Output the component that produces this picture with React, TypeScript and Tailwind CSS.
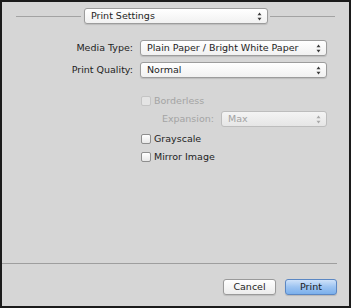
const font = { fontFamily: '"DejaVu Sans", "Liberation Sans", sans-serif' };

function Arrows({ dim = false }: { dim?: boolean }) {
  return (
    <svg width="5" height="9" viewBox="0 0 5 9" className="shrink-0">
      <path d="M2.5 0.5 L4.5 3.3 L0.5 3.3 Z" fill={dim ? '#a8a8a8' : '#3a3a3a'} />
      <path d="M2.5 8.5 L4.5 5.7 L0.5 5.7 Z" fill={dim ? '#a8a8a8' : '#3a3a3a'} />
    </svg>
  );
}

function Popup({
  value,
  width,
  disabled = false,
}: {
  value: string;
  width: string;
  disabled?: boolean;
}) {
  return (
    <div
      className={`${width} flex h-[16px] items-center justify-between rounded-[3px] border pl-[6px] pr-[5px] ${
        disabled
          ? 'border-[#bdbdbd] bg-gradient-to-b from-[#f4f4f4] to-[#e6e6e6] text-[#a2a2a2]'
          : 'border-[#9c9c9c] bg-gradient-to-b from-white to-[#f1f1f1] text-[#1e1e1e] shadow-[0_1px_1px_rgba(0,0,0,0.12)]'
      }`}
    >
      <span className="leading-none">{value}</span>
      <Arrows dim={disabled} />
    </div>
  );
}

function Checkbox({ label, disabled = false }: { label: string; disabled?: boolean }) {
  return (
    <div className="flex h-[14px] items-center gap-[3px]">
      <span
        className={`h-[10px] w-[10px] rounded-[2px] border ${
          disabled
            ? 'border-[#c4c4c4] bg-[#e4e4e4]'
            : 'border-[#8e8e8e] bg-gradient-to-b from-white to-[#e8e8e8]'
        }`}
      />
      <span className={`leading-none ${disabled ? 'text-[#a4a4a4]' : 'text-[#1e1e1e]'}`}>{label}</span>
    </div>
  );
}

export default function App() {
  return (
    <div
      style={font}
      className="flex h-[308px] w-[351px] flex-col border-2 border-[#1b1b1b] bg-[#d6d6d6] text-[9.5px]"
    >
      <div className="mt-[6px] flex h-[16px] items-center">
        <div className="ml-[14px] mr-[3px] h-px flex-1 bg-[#a3a3a3]" />
        <Popup value="Print Settings" width="w-[184px]" />
        <div className="ml-[2px] mr-[14px] h-px flex-1 bg-[#a3a3a3]" />
      </div>

      <div className="mt-[16px] flex h-[16px] items-center">
        <span className="w-[131px] text-right text-[#1e1e1e]">Media Type:</span>
        <div className="ml-[7px]">
          <Popup value="Plain Paper / Bright White Paper" width="w-[187px]" />
        </div>
      </div>
      <div className="mt-[6px] flex h-[16px] items-center">
        <span className="w-[131px] text-right text-[#1e1e1e]">Print Quality:</span>
        <div className="ml-[7px]">
          <Popup value="Normal" width="w-[187px]" />
        </div>
      </div>

      <div className="ml-[139px] mt-[16px] flex w-[186px] flex-col">
        <Checkbox label="Borderless" disabled />
        <div className="mt-[3px] flex h-[16px] items-center">
          <span className="flex-1 text-right text-[#a4a4a4]">Expansion:</span>
          <div className="ml-[7px]">
            <Popup value="Max" width="w-[106px]" disabled />
          </div>
        </div>
        <div className="mt-[5px]">
          <Checkbox label="Grayscale" />
        </div>
        <div className="mt-[4px]">
          <Checkbox label="Mirror Image" />
        </div>
      </div>

      <div className="flex-1" />

      <div className="mr-[12px] h-px bg-[#9e9e9e]" />

      <div className="mb-[11px] mr-[12px] mt-[15px] flex justify-end gap-[9px]">
        <button className="h-[16px] w-[53px] rounded-[3px] border border-[#9a9a9a] bg-gradient-to-b from-white to-[#ececec] leading-none text-[#1e1e1e] shadow-[0_1px_1px_rgba(0,0,0,0.12)]">
          Cancel
        </button>
        <button className="h-[16px] w-[52px] rounded-[3px] border border-[#5b87c3] bg-gradient-to-b from-[#cfe2f9] via-[#9cc3f1] to-[#7bb0ec] leading-none text-[#1b1b1b] shadow-[0_1px_1px_rgba(0,0,0,0.15)]">
          Print
        </button>
      </div>
    </div>
  );
}
